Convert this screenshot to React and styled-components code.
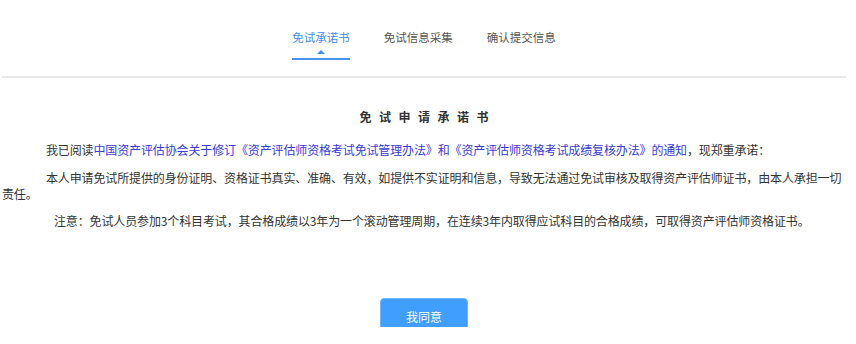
import React from "react";
import styled, { createGlobalStyle } from "styled-components";

const GlobalStyle = createGlobalStyle`
  body {
    margin: 0;
    background: #fff;
    font-family: "Noto Sans CJK SC", "Noto Sans", sans-serif;
    color: #333;
  }
`;

const Page = styled.div`
  width: 844px;
  margin-left: 2px;
  height: 327px;
  overflow: hidden;
`;

const TabBar = styled.nav`
  display: flex;
  justify-content: center;
  align-items: flex-start;
  gap: 34px;
  height: 60px;
`;

const Tab = styled.div`
  display: flex;
  flex-direction: column;
  align-items: center;
  padding-top: 29px;
  font-size: 11.5px;
  line-height: 16px;
  color: ${(p) => (p.$active ? "#3f8fe6" : "#555")};
  cursor: pointer;
`;

const Caret = styled.span`
  margin-top: 5px;
  width: 0;
  height: 0;
  border-left: 4px solid transparent;
  border-right: 4px solid transparent;
  border-bottom: 4px solid #3f8fe6;
`;

const Underline = styled.span`
  margin-top: 4px;
  align-self: stretch;
  height: 2px;
  background: #4a93e8;
`;

const Divider = styled.div`
  margin-top: 16px;
  height: 2px;
  background: #e8e8e8;
`;

const Content = styled.div`
  padding-top: 31px;
  font-size: 12px;
  line-height: 16px;
  letter-spacing: -0.13px;
`;

const Title = styled.h2`
  margin: 0;
  text-align: center;
  font-size: 12px;
  line-height: 16px;
  font-weight: bold;
  letter-spacing: 7.5px;
  padding-left: 7.5px;
  color: #333;
`;

const Para = styled.p`
  margin: ${(p) => p.$gap ?? 12}px 0 0;
  text-indent: ${(p) => p.$indent}px;
`;

const Link = styled.span`
  color: #3a3ad6;
`;

const Footer = styled.div`
  display: flex;
  justify-content: center;
  margin-top: 69px;
`;

const Button = styled.button`
  width: 88px;
  height: 36px;
  border: 1px solid #6db4ff;
  border-radius: 4px;
  background: #409eff;
  color: #fff;
  font-family: inherit;
  font-size: 12px;
  padding: 0;
  cursor: pointer;
`;

const tabs = ["免试承诺书", "免试信息采集", "确认提交信息"];

export default function App() {
  return (
    <>
      <GlobalStyle />
      <Page>
        <TabBar>
          {tabs.map((t, i) => (
            <Tab key={t} $active={i === 0}>
              {t}
              {i === 0 && (
                <>
                  <Caret />
                  <Underline />
                </>
              )}
            </Tab>
          ))}
        </TabBar>
        <Divider />
        <Content>
          <Title>免试申请承诺书</Title>
          <Para $gap={17} $indent={44}>
            我已阅读
            <Link>
              中国资产评估协会关于修订《资产评估师资格考试免试管理办法》和《资产评估师资格考试成绩复核办法》的通知
            </Link>
            ，现郑重承诺：
          </Para>
          <Para $indent={44}>
            本人申请免试所提供的身份证明、资格证书真实、准确、有效，如提供不实证明和信息，导致无法通过免试审核及取得资产评估师证书，由本人承担一切责任。
          </Para>
          <Para $gap={11} $indent={52}>
            注意：免试人员参加3个科目考试，其合格成绩以3年为一个滚动管理周期，在连续3年内取得应试科目的合格成绩，可取得资产评估师资格证书。
          </Para>
          <Footer>
            <Button>我同意</Button>
          </Footer>
        </Content>
      </Page>
    </>
  );
}
